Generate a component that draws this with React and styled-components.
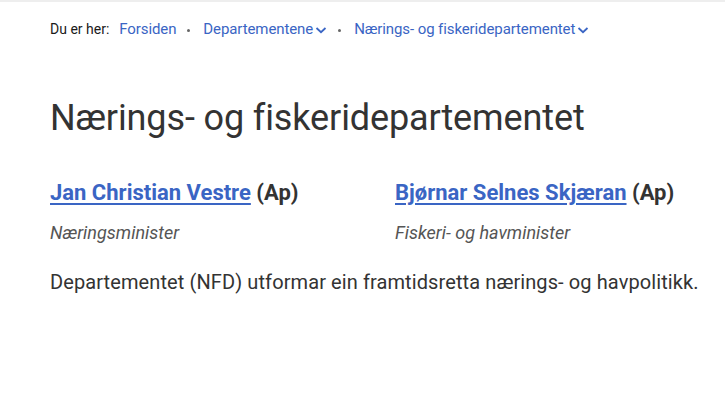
import React from 'react';
import styled, { createGlobalStyle } from 'styled-components';

const GlobalStyle = createGlobalStyle`
  body {
    margin: 0;
    background: #fff;
    font-family: Roboto, "Liberation Sans", sans-serif;
    color: #333;
  }
`;

const Page = styled.div`
  border-top: 2px solid #eeeeee;
  padding: 17px 20px 0 50px;
`;

const Crumbs = styled.nav`
  display: flex;
  align-items: center;
  font-size: 14px;
  line-height: 20px;
`;

const Here = styled.span`
  color: #1a1a1a;
  margin-right: 10px;
`;

const Crumb = styled.a`
  color: #3a65c4;
  font-size: 15px;
  letter-spacing: -0.1px;
  text-decoration: none;
  display: inline-flex;
  align-items: center;
`;

const Dot = styled.span`
  width: 3px;
  height: 3px;
  border-radius: 50%;
  background: #666;
  margin: 2px 13px 0 11px;
`;

const Chevron = () => (
  <svg width="12" height="12" viewBox="0 0 12 12" style={{ marginLeft: 2, marginTop: 1 }}>
    <path d="M1.5 4 L6 8.2 L10.5 4" fill="none" stroke="#3a65c4" strokeWidth="1.8" />
  </svg>
);

const Title = styled.h1`
  margin: 57px 0 0;
  font-weight: 400;
  font-size: 36px;
  line-height: 44px;
  letter-spacing: -0.12px;
  color: #333;
`;

const Ministers = styled.div`
  display: grid;
  grid-template-columns: 345px 1fr;
  margin-top: 39px;
`;

const Minister = styled.div``;

const Name = styled.div`
  font-size: 22px;
  line-height: 28px;
  font-weight: 700;
  color: #333;
`;

const NameLink = styled.a`
  color: #3a65c4;
  text-decoration: underline;
  text-underline-offset: 3px;
  text-decoration-thickness: 2px;
`;

const Role = styled.div`
  margin-top: 14px;
  font-size: 18px;
  line-height: 24px;
  font-style: italic;
  color: #555;
`;

const Lead = styled.p`
  margin: 23px 0 0;
  font-size: 20px;
  line-height: 28px;
  letter-spacing: 0.1px;
  color: #333;
`;

export default function App() {
  return (
    <>
      <GlobalStyle />
      <Page>
        <Crumbs>
          <Here>Du er her:</Here>
          <Crumb href="#">Forsiden</Crumb>
          <Dot />
          <Crumb href="#">Departementene<Chevron /></Crumb>
          <Dot />
          <Crumb href="#">Nærings- og fiskeridepartementet<Chevron /></Crumb>
        </Crumbs>
        <Title>Nærings- og fiskeridepartementet</Title>
        <Ministers>
          <Minister>
            <Name><NameLink href="#">Jan Christian Vestre</NameLink> (Ap)</Name>
            <Role>Næringsminister</Role>
          </Minister>
          <Minister>
            <Name><NameLink href="#">Bjørnar Selnes Skjæran</NameLink> (Ap)</Name>
            <Role>Fiskeri- og havminister</Role>
          </Minister>
        </Ministers>
        <Lead>Departementet (NFD) utformar ein framtidsretta nærings- og havpolitikk.</Lead>
      </Page>
    </>
  );
}
